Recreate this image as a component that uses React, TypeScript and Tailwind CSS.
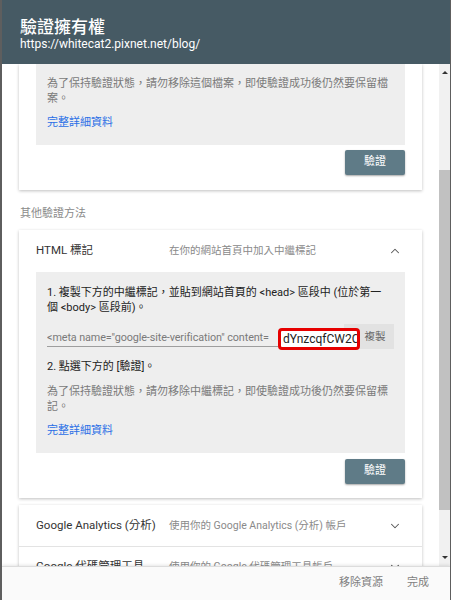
import { ChevronDown, ChevronUp } from "lucide-react";

function VerifyButton() {
    return (
        <div className="flex justify-end">
            <button className="w-[60px] h-[25px] rounded-[2px] bg-[#5f7b87] text-white text-[11px] shadow-[0_1px_2px_rgba(0,0,0,0.35)]">驗證</button>
        </div>
    );
}

function MethodRow({ title, desc, border }: { title: string; desc: string; border?: boolean }) {
    return (
        <div className={"flex items-center h-[41px] pl-[17px] pr-[20px] " + (border ? "border-t border-[#e3e3e3]" : "")}>
            <div className="w-[133px] text-[11.5px] text-[#333] whitespace-nowrap">{title}</div>
            <div className="flex-1 text-[#8a8a8a] text-[10.5px] whitespace-nowrap">{desc}</div>
            <ChevronDown size={14} strokeWidth={1.8} className="text-[#555]" />
        </div>
    );
}

export default function App() {
    return (
        <div className="w-[451px] h-[600px] flex flex-col overflow-hidden border-l-2 border-r border-[#5e5e5e] font-['Roboto','Noto_Sans_CJK_TC',sans-serif]">
            <div className="h-[64px] shrink-0 bg-[#465a64] px-[18px] pt-[17px] text-white">
                <div className="text-[17px] leading-[20px] font-medium">驗證擁有權</div>
                <div className="text-[12px] leading-[15px]">https://whitecat2.pixnet.net/blog/</div>
            </div>

            <div className="flex flex-1 min-h-0">
                <div className="flex-1 overflow-hidden bg-white px-[17px]">
                    {/* first card, top part scrolled away */}
                    <div className="bg-white px-[17px] pb-[15px] shadow-[0_1px_3px_rgba(0,0,0,0.25)]">
                        <div className="bg-[#eeeeee] px-[11px] pt-[12px] pb-[15px] text-[11px] leading-[15px]">
                            <p className="text-[#7a7a7a]">為了保持驗證狀態，請勿移除這個檔案，即使驗證成功後仍然要保留檔案。</p>
                            <p className="mt-[9px] text-[#2a6ee6]">完整詳細資料</p>
                        </div>
                        <div className="mt-[5px]">
                            <VerifyButton />
                        </div>
                    </div>

                    <div className="mt-[16px] px-[1px] text-[11px] leading-[15px] text-[#8a8a8a]">其他驗證方法</div>

                    <div className="mt-[9px] bg-white px-[17px] pb-[14px] shadow-[0_1px_3px_rgba(0,0,0,0.25)]">
                        <div className="flex items-center h-[42px] pr-[3px]">
                            <div className="w-[133px] text-[11.5px] text-[#333]">HTML 標記</div>
                            <div className="flex-1 text-[#8a8a8a] text-[10.5px]">在你的網站首頁中加入中繼標記</div>
                            <ChevronUp size={14} strokeWidth={1.8} className="text-[#555]" />
                        </div>
                        <div className="bg-[#eeeeee] px-[11px] pt-[13px] pb-[15px] text-[11px] leading-[15px]">
                            <p className="text-[#222]">1. 複製下方的中繼標記，並貼到網站首頁的 &lt;head&gt; 區段中 (位於第一<br />個 &lt;body&gt; 區段前)。</p>
                            <div className="mt-[9px] flex items-center h-[25px]">
                                <div className="relative flex-1 h-full flex items-center">
                                    <div className="w-[231px] border-b border-[#9e9e9e] pb-[1px] pt-[3px] text-[#7a7a7a] text-[10.8px] tracking-[-0.1px] whitespace-nowrap overflow-hidden">&lt;meta name="google-site-verification" content=</div>
                                    <div className="absolute left-[231px] top-[4px] w-[82px] h-[22px] rounded-[4px] border-[3px] border-[#e60000] bg-white flex items-center overflow-hidden pl-[2px] text-[12px] text-[#222] whitespace-nowrap z-10">dYnzcqfCW2C</div>
                                </div>
                                <div className="w-[50px] h-full bg-[#e2e2e2] flex items-center justify-center pl-[12px] text-[#666] text-[10.5px]">複製</div>
                            </div>
                            <p className="mt-[10px] text-[#222]">2. 點選下方的 [驗證]。</p>
                            <p className="mt-[10px] text-[#7a7a7a]">為了保持驗證狀態，請勿移除中繼標記，即使驗證成功後仍然要保留標記。</p>
                            <p className="mt-[9px] text-[#2a6ee6]">完整詳細資料</p>
                        </div>
                        <div className="mt-[6px]">
                            <VerifyButton />
                        </div>
                    </div>

                    <div className="mt-[7px] bg-white shadow-[0_1px_3px_rgba(0,0,0,0.25)]">
                        <MethodRow title="Google Analytics (分析)" desc="使用你的 Google Analytics (分析) 帳戶" />
                        <MethodRow title="Google 代碼管理工具" desc="使用你的 Google 代碼管理工具帳戶" border />
                    </div>
                </div>

                {/* scrollbar */}
                <div className="w-[11px] shrink-0 bg-[#f1f1f1] flex flex-col items-center">
                    <div className="h-[17px] flex items-center justify-center">
                        <div className="w-0 h-0 border-x-[3px] border-x-transparent border-b-[3px] border-b-[#333]" />
                    </div>
                    <div className="mt-[89px] h-[340px] w-full bg-[#c1c1c1]" />
                    <div className="flex-1" />
                    <div className="h-[17px] flex items-center justify-center">
                        <div className="w-0 h-0 border-x-[3px] border-x-transparent border-t-[3px] border-t-[#333]" />
                    </div>
                </div>
            </div>

            <div className="h-[34px] shrink-0 bg-[#fafafa] border-t border-[#dcdcdc] shadow-[0_-1px_3px_rgba(0,0,0,0.1)] flex items-center justify-end gap-[24px] pr-[21px] text-[11px] text-[#808080]">
                <span>移除資源</span>
                <span>完成</span>
            </div>
        </div>
    );
}
